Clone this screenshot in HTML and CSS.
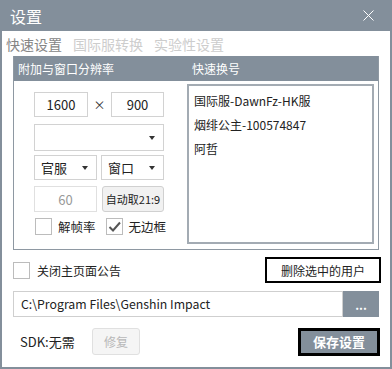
FILE: index.html
```html
<!DOCTYPE html>
<html lang="zh-CN">
<head>
  <meta charset="UTF-8">
  <title>设置</title>
  <link rel="stylesheet" href="styles.css">
</head>
<body>
  <div class="window">
    <div class="titlebar">
      <span class="title">设置</span>
      <svg class="close" width="11" height="11" viewBox="0 0 11 11">
        <path d="M0.5 0.5 L10.5 10.5 M10.5 0.5 L0.5 10.5" stroke="#fff" stroke-width="1" fill="none"/>
      </svg>
    </div>

    <div class="content">
      <div class="tabs">
        <span class="tab active">快速设置</span>
        <span class="tab">国际服转换</span>
        <span class="tab">实验性设置</span>
      </div>

      <div class="group">
        <div class="group-head">
          <span class="head-left">附加与窗口分辨率</span>
          <span class="head-right">快速换号</span>
        </div>
        <div class="group-body">
          <div class="controls">
            <div class="row size-row">
              <div class="field size-w">1600</div>
              <span class="times">×</span>
              <div class="field size-h">900</div>
            </div>
            <div class="select wide"><span></span><i class="arrow"></i></div>
            <div class="row pair">
              <div class="select half"><span>官服</span><i class="arrow"></i></div>
              <div class="select half"><span>窗口</span><i class="arrow"></i></div>
            </div>
            <div class="row pair fps-row">
              <div class="field fps">60</div>
              <button class="auto">自动取21:9</button>
            </div>
            <div class="row checks">
              <label class="check"><span class="box"></span>解帧率</label>
              <label class="check second">
                <span class="box">
                  <svg width="13" height="12" viewBox="0 0 13 12">
                    <path d="M1.5 6 L5 9.5 L12 1.5" stroke="#555" stroke-width="2" fill="none"/>
                  </svg>
                </span>无边框
              </label>
            </div>
          </div>

          <div class="account-list">
            <div class="item">国际服-DawnFz-HK服</div>
            <div class="item">烟绯公主-100574847</div>
            <div class="item">阿哲</div>
          </div>
        </div>
      </div>

      <div class="notice-row">
        <label class="check"><span class="box"></span>关闭主页面公告</label>
        <button class="delete">删除选中的用户</button>
      </div>

      <div class="path-row">
        <div class="path">C:\Program Files\Genshin Impact</div>
        <button class="browse">...</button>
      </div>

      <div class="footer-row">
        <span class="sdk">SDK:无需</span>
        <button class="repair" disabled>修复</button>
        <button class="save">保存设置</button>
      </div>
    </div>
  </div>
</body>
</html>
```

FILE: styles.css
```css
body { margin: 0; font-family: "Noto Sans CJK SC", "Noto Sans", sans-serif; color: #222; background: #fff; }
.window { width: 392px; height: 369px; display: flex; flex-direction: column; }
.titlebar { height: 31px; background: #838f9b; display: flex; align-items: center; justify-content: space-between; padding: 0 18px 0 10px; flex-shrink: 0; }
.title { color: #fff; font-size: 16px; line-height: 1; }
.close { display: block; }
.content { flex: 1; border: 2px solid #838f9b; border-top: 0; display: flex; flex-direction: column; }

.tabs { height: 25px; display: flex; align-items: center; gap: 11px; padding-left: 4px; font-size: 14px; }
.tab { color: #cdcdcd; }
.tab.active { color: #858585; }

.group { margin: 0 11px; border: 1px solid #8e98a2; border-top: 0; height: 193px; display: flex; flex-direction: column; }
.group-head { height: 25px; background: #838f9b; color: #fff; font-size: 12px; display: grid; grid-template-columns: 173px 1fr; align-items: center; }
.head-left { padding-left: 4px; }
.head-right { padding-left: 5px; }
.group-body { flex: 1; display: grid; grid-template-columns: 173px 1fr; }

.controls { padding: 11px 0 0 20px; display: flex; flex-direction: column; }
.row { display: flex; align-items: center; }
.field { box-sizing: border-box; height: 25px; border: 1px solid #d2d2d2; font-size: 13px; display: flex; align-items: center; justify-content: center; }
.size-w { width: 54px; }
.size-h { width: 53px; }
.times { width: 23px; text-align: center; font-size: 12px; color: #333; }
.select { box-sizing: border-box; height: 27px; border: 1px solid #d2d2d2; font-size: 13px; display: flex; align-items: center; justify-content: space-between; padding: 0 8px 0 6px; }
.select.wide { width: 130px; margin-top: 7px; }
.pair { gap: 4px; margin-top: 4px; }
.select.half { width: 63px; height: 25px; }
.arrow { width: 0; height: 0; border-left: 3px solid transparent; border-right: 3px solid transparent; border-top: 4px solid #333; }
.fps-row { margin-top: 6px; gap: 5px; }
.field.fps { width: 63px; height: 26px; color: #999; border-color: #e0e0e0; }
.auto { box-sizing: border-box; width: 62px; height: 26px; padding: 0; font-family: inherit; font-size: 11px; color: #222; background: #f1f1f1; border: 1px solid #d0d0d0; border-radius: 3px; }
.checks { margin-top: 5px; padding-left: 1px; }
.check { display: flex; align-items: center; gap: 6px; font-size: 12.5px; }
.check.second { margin-left: 10px; }
.box { box-sizing: border-box; width: 17px; height: 17px; border: 1px solid #bcbcbc; display: flex; align-items: center; justify-content: center; }

.account-list { margin: 3px 4px 5px 0; border: 2px solid #a3abb3; padding: 3px 0 0 5px; font-size: 12px; }
.item { line-height: 24px; }

.notice-row { margin: 7px 9px 0 11px; height: 26px; display: flex; align-items: center; justify-content: space-between; }
.notice-row .check { font-size: 12px; gap: 7px; }
.delete { box-sizing: border-box; width: 116px; height: 26px; padding: 0; font-family: inherit; font-size: 12px; color: #222; background: #fff; border: 2px solid #000; }

.path-row { margin: 8px 11px 0 11px; height: 26px; display: flex; }
.path { box-sizing: border-box; flex: 1; border: 1px solid #cfcfcf; padding-left: 7px; font-size: 12.3px; display: flex; align-items: center; }
.browse { width: 36px; padding: 0; border: 0; background: #838f9b; color: #fff; font-family: inherit; font-size: 12px; font-weight: bold; }

.footer-row { margin: 10px 10px 0 18px; height: 29px; display: flex; align-items: center; }
.sdk { font-size: 13px; width: 72px; }
.repair { box-sizing: border-box; width: 48px; height: 27px; padding: 0; font-family: inherit; font-size: 12px; color: #b8b8b8; background: #f5f5f5; border: 1px solid #e0e0e0; border-radius: 3px; }
.save { box-sizing: border-box; width: 82px; height: 28px; margin-left: auto; padding: 0; font-family: inherit; font-size: 13px; font-weight: bold; color: #fff; background: #838f9b; border: 3px solid #000; }
```
